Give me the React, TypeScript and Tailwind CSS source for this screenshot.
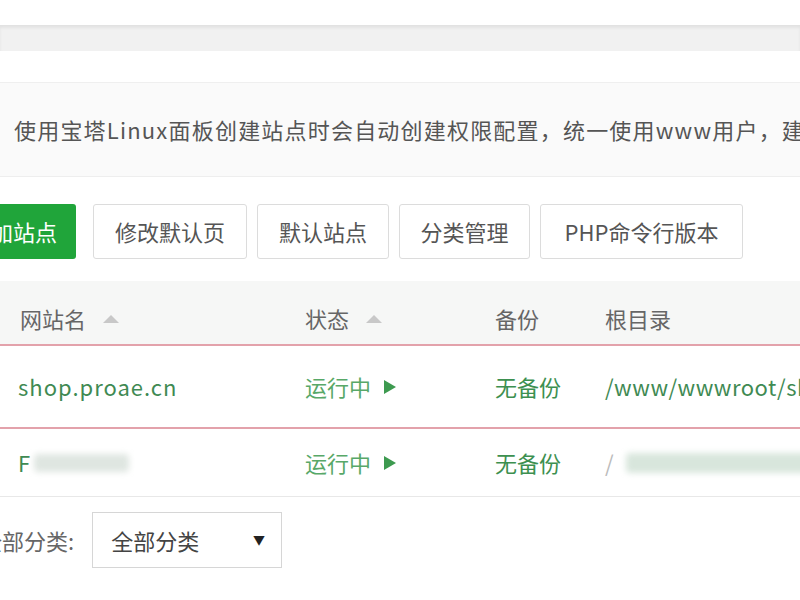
import React from 'react';

const font = { fontFamily: '"Noto Sans CJK SC", "Liberation Sans", sans-serif' };

const SortUp = () => (
  <svg width="18" height="10" viewBox="0 0 18 10" className="ml-4 inline-block">
    <path d="M9 1 L17 9 H1 Z" fill="#c8c8c8" />
  </svg>
);

const Play = () => (
  <svg width="14" height="16" viewBox="0 0 14 16" className="ml-3 inline-block">
    <path d="M1 1 L13 8 L1 15 Z" fill="#3d9a50" />
  </svg>
);

const ToolButton: React.FC<{ label: string; w: string }> = ({ label, w }) => (
  <button className={`${w} h-[55px] shrink-0 rounded-[3px] border border-[#dcdcdc] bg-white text-[22px] text-[#555]`}>
    {label}
  </button>
);

const App: React.FC = () => {
  return (
    <div className="w-[800px] h-[600px] overflow-hidden bg-white" style={font}>
      {/* top bar edge */}
      <div className="h-[25px] bg-white" />
      <div className="h-[26px] bg-[#f1f1f1] border-t border-[#e2e2e2] shadow-[inset_0_2px_3px_rgba(0,0,0,0.06)]" />
      <div className="h-[32px] bg-white border-b border-[#efefef]" />

      {/* notice */}
      <div className="h-[94px] bg-[#fafafa] border-b border-[#eeeeee] flex items-center pl-[14px] overflow-hidden">
        <p className="whitespace-nowrap text-[22px] text-[#555] tracking-[1.2px]">
          使用宝塔Linux面板创建站点时会自动创建权限配置，统一使用www用户，建站
        </p>
      </div>

      {/* toolbar */}
      <div className="flex items-center pt-[27px] pb-[22px]">
        <button className="ml-[-50px] w-[126px] h-[55px] shrink-0 rounded-[3px] bg-[#20a53a] text-[22px] text-white">
          添加站点
        </button>
        <div className="ml-[17px] flex gap-[10px]">
          <ToolButton label="修改默认页" w="w-[154px]" />
          <ToolButton label="默认站点" w="w-[132px]" />
          <ToolButton label="分类管理" w="w-[131px]" />
          <ToolButton label="PHP命令行版本" w="w-[203px]" />
        </div>
      </div>

      {/* table */}
      <div className="text-[22px]">
        <div className="h-[63px] bg-[#f6f7f6] flex items-center pt-[12px] text-[#666]">
          <div className="w-[305px] shrink-0 pl-[20px] flex items-center">网站名<SortUp /></div>
          <div className="w-[190px] shrink-0 flex items-center">状态<SortUp /></div>
          <div className="w-[110px] shrink-0">备份</div>
          <div className="flex-1 whitespace-nowrap">根目录</div>
        </div>
        <div className="h-[85px] flex items-center border-y-2 border-[#e3a2ab] bg-white overflow-hidden">
          <div className="w-[305px] shrink-0 pl-[18px] text-[#3f8a53] tracking-[1px]">shop.proae.cn</div>
          <div className="w-[190px] shrink-0 flex items-center text-[#58a868]">运行中<Play /></div>
          <div className="w-[110px] shrink-0 text-[#3d9050]">无备份</div>
          <div className="flex-1 whitespace-nowrap text-[#3f8a53] tracking-[0.5px]">/www/wwwroot/shop.proae.cn</div>
        </div>
        <div className="h-[68px] flex items-center border-b border-[#e8e8e8] bg-white overflow-hidden">
          <div className="w-[305px] shrink-0 pl-[18px] flex items-center text-[#3f8a53]">
            F<span className="ml-1 inline-block h-[18px] w-[95px] rounded bg-[#dfe6e1] blur-[3px]" />
          </div>
          <div className="w-[190px] shrink-0 flex items-center text-[#58a868]">运行中<Play /></div>
          <div className="w-[110px] shrink-0 text-[#3d9050]">无备份</div>
          <div className="flex-1 flex items-center text-[#bbb]">
            /<span className="ml-3 inline-block h-[20px] w-[200px] rounded bg-[#d8e6dc] blur-[3px]" />
          </div>
        </div>
      </div>

      {/* footer filter */}
      <div className="flex items-center pt-[15px] text-[22px] text-[#666]">
        <span className="ml-[-20px] shrink-0 whitespace-nowrap">全部分类:</span>
        <div className="ml-[18px] w-[190px] h-[56px] shrink-0 border border-[#d6d6d6] flex items-center justify-between pl-[18px] pr-[16px] text-[#444]">
          <span>全部分类</span>
          <span className="text-[12px] text-[#222]">▼</span>
        </div>
      </div>
    </div>
  );
};

export default App;
